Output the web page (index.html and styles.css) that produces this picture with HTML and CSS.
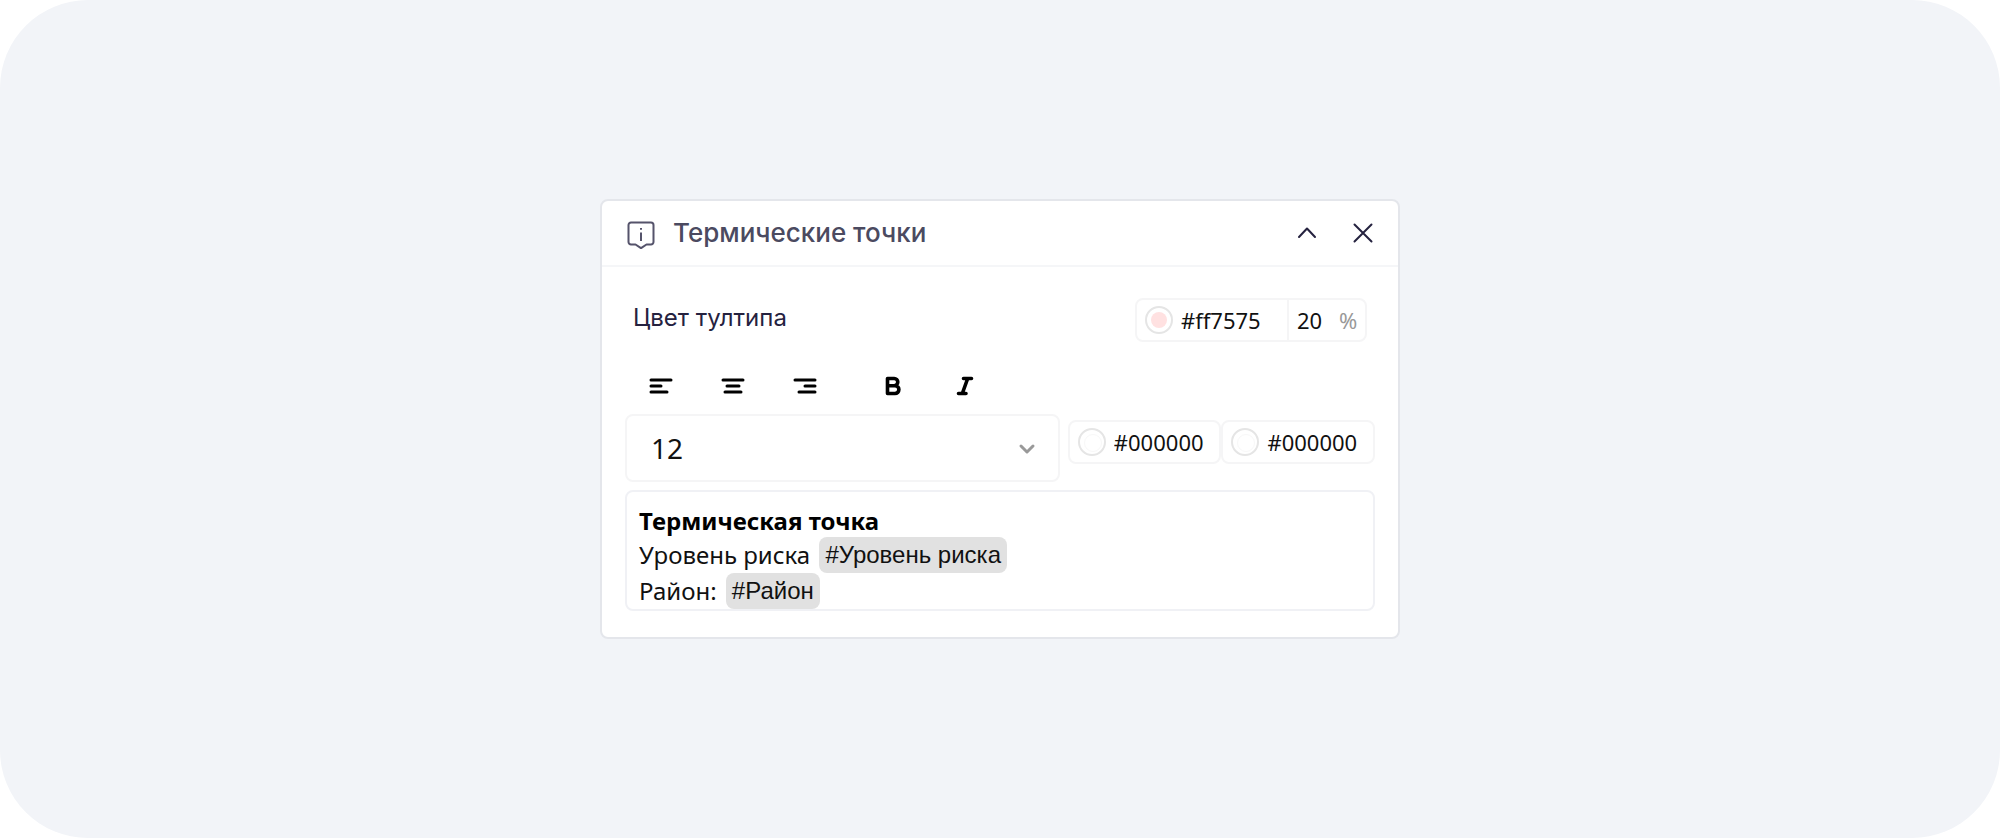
FILE: index.html
```html
<!DOCTYPE html>
<html lang="ru">
<head>
<meta charset="utf-8">
<meta name="viewport" content="width=device-width, initial-scale=1">
<title>Термические точки</title>
<link rel="stylesheet" href="styles.css">
</head>
<body>
<main class="stage">
  <section class="panel" aria-labelledby="panel-title">
    <header class="panel-header">
      <svg class="title-icon" viewBox="0 0 28 28" aria-hidden="true">
        <path d="M4 1.500h20a2.500 2.500 0 0 1 2.500 2.500v17a2.500 2.500 0 0 1-2.500 2.500h-4.500L14 27.200l-5.500-3.700H4A2.500 2.500 0 0 1 1.500 21V4A2.500 2.500 0 0 1 4 1.500z"/>
        <path d="M14 11.500v8.500M14 7v1.800"/>
      </svg>
      <h1 class="panel-title" id="panel-title">Термические точки</h1>
      <button class="header-button" type="button" aria-label="Свернуть">
        <svg class="header-glyph" viewBox="0 0 24 24" aria-hidden="true"><path d="M4 16l8-8.500 8 8.500"/></svg>
      </button>
      <button class="header-button" type="button" aria-label="Закрыть">
        <svg class="header-glyph" viewBox="0 0 24 24" aria-hidden="true"><path d="M3.500 3.500l17 17M20.500 3.500l-17 17"/></svg>
      </button>
    </header>

    <div class="panel-body">
      <div class="color-row">
        <label class="row-label" for="tooltip-color">Цвет тултипа</label>
        <div class="color-field color-field-wide">
          <span class="swatch swatch-pink"></span>
          <input class="hex-input" id="tooltip-color" type="text" value="#ff7575">
          <div class="opacity">
            <input class="opacity-input" id="tooltip-opacity" type="text" value="20" aria-label="Непрозрачность">
            <label class="percent" for="tooltip-opacity">%</label>
          </div>
        </div>
      </div>

      <div class="toolbar" role="toolbar" aria-label="Форматирование">
        <button class="tool" type="button" aria-label="По левому краю">
          <svg class="tool-glyph" viewBox="0 0 24 24" aria-hidden="true"><path d="M2 6h20M2 12h10M2 18h16"/></svg>
        </button>
        <button class="tool" type="button" aria-label="По центру">
          <svg class="tool-glyph" viewBox="0 0 24 24" aria-hidden="true"><path d="M2 6h20M6 12h12M4 18h16"/></svg>
        </button>
        <button class="tool" type="button" aria-label="По правому краю">
          <svg class="tool-glyph" viewBox="0 0 24 24" aria-hidden="true"><path d="M2 6h20M12 12h10M6 18h16"/></svg>
        </button>
        <span class="tool-gap"></span>
        <button class="tool" type="button" aria-label="Полужирный">
          <svg class="tool-glyph tool-glyph-bold" viewBox="0 0 24 24" aria-hidden="true"><path d="M6.500 4.500h6.700a3.600 3.600 0 0 1 0 7.200H6.500zM6.500 11.700h7.500a3.900 3.900 0 0 1 0 7.800H6.500z"/></svg>
        </button>
        <button class="tool" type="button" aria-label="Курсив">
          <svg class="tool-glyph tool-glyph-bold" viewBox="0 0 24 24" aria-hidden="true"><path d="M10.500 4.500H18.500M5.500 19.500h7.500M14.700 4.500L9.300 19.500"/></svg>
        </button>
      </div>

      <div class="style-row">
        <div class="select-box">
          <select class="size-select" aria-label="Размер шрифта">
            <option selected>12</option>
            <option>14</option>
            <option>16</option>
          </select>
          <svg class="select-arrow" viewBox="0 0 18 18" aria-hidden="true"><path d="M3 6l6 6 6-6"/></svg>
        </div>
        <div class="color-pair">
          <div class="color-field">
            <span class="swatch"></span>
            <input class="hex-input" type="text" value="#000000" aria-label="Цвет текста">
          </div>
          <div class="color-field">
            <span class="swatch"></span>
            <input class="hex-input" type="text" value="#000000" aria-label="Цвет фона">
          </div>
        </div>
      </div>

      <div class="editor" contenteditable="true" spellcheck="false" role="textbox" aria-multiline="true" aria-label="Текст тултипа">
        <div class="line line-bold">Термическая точка</div>
        <div class="line">Уровень риска <span class="chip">#Уровень риска</span></div>
        <div class="line">Район: <span class="chip">#Район</span></div>
      </div>
    </div>
  </section>
</main>
</body>
</html>
```
FILE: styles.css
```css
* {
  box-sizing: border-box;
}

body {
  margin: 0;
  background: #fff;
  font-family: "Noto Sans", sans-serif;
  color: #111;
}

button,
input,
select {
  margin: 0;
  padding: 0;
  border: 0;
  background: none;
  font: inherit;
  color: inherit;
}

.stage {
  display: flex;
  align-items: center;
  justify-content: center;
  min-height: 100vh;
  border-radius: 88px;
  background: #f2f4f8;
}

.panel {
  width: 100%;
  max-width: 800px;
  border: 2px solid #e4e6eb;
  border-radius: 8px;
  background: #fff;
}

.panel-header {
  display: flex;
  align-items: center;
  gap: 24px;
  height: 66px;
  padding: 0 19px 0 25px;
  border-bottom: 2px solid #f5f6f8;
}

.title-icon {
  width: 28px;
  height: 28px;
  margin-top: 4px;
  margin-right: -6px;
  fill: none;
  stroke: #55536b;
  stroke-width: 2;
  stroke-linejoin: round;
}

.panel-title {
  flex: 1;
  margin: 0;
  font: 500 26px/32px Inter, sans-serif;
  color: #4b4a60;
}

.header-button {
  display: flex;
  align-items: center;
  justify-content: center;
  width: 32px;
  height: 32px;
}

.header-glyph {
  width: 24px;
  height: 24px;
  fill: none;
  stroke: #25223f;
  stroke-width: 2;
  stroke-linecap: round;
  stroke-linejoin: round;
}

.panel-body {
  padding: 31px 23px 26px;
}

.color-row {
  display: flex;
  align-items: center;
  justify-content: space-between;
  padding: 0 8px;
}

.row-label {
  font: 400 24px/32px Inter, sans-serif;
  color: #25223f;
  padding-bottom: 4px;
}

.color-field {
  display: flex;
  flex: 1;
  align-items: center;
  gap: 8px;
  height: 44px;
  padding-left: 8px;
  border: 2px solid #f5f5f6;
  border-radius: 8px;
}

.color-field-wide {
  flex: 0 0 232px;
}

.swatch {
  flex: none;
  width: 28px;
  height: 28px;
  border: 2px solid #e5e5e5;
  border-radius: 50%;
  padding: 4px;
}

.swatch::before {
  content: "";
  display: block;
  width: 16px;
  height: 16px;
  border: 1px solid #f8f8f8;
  border-radius: 50%;
}

.swatch-pink::before {
  border: 0;
  background: #ffe1e1;
}

.hex-input {
  flex: 1;
  min-width: 0;
  width: 0;
  height: 32px;
  font-size: 22px;
}

.opacity {
  display: flex;
  align-items: center;
  width: 78px;
  height: 100%;
  padding: 0 8px;
  border-left: 2px solid #f5f5f6;
}

.opacity-input {
  width: 42px;
  height: 32px;
  font-size: 22px;
}

.percent {
  font-size: 22px;
  color: #999;
}

.toolbar {
  display: flex;
  align-items: center;
  gap: 40px;
  padding: 28px 20px 12px;
}

.tool {
  display: flex;
  align-items: center;
  justify-content: center;
  width: 32px;
  height: 32px;
}

.tool-gap {
  width: 0;
  margin-right: -24px;
}

.tool-glyph {
  width: 24px;
  height: 24px;
  fill: none;
  stroke: #000;
  stroke-width: 3;
  stroke-linecap: round;
  stroke-linejoin: round;
}

.tool-glyph-bold {
  stroke-width: 3.600;
}

.style-row {
  display: flex;
  align-items: flex-start;
  gap: 8px;
}

.select-box {
  position: relative;
  flex: 436;
}

.size-select {
  appearance: none;
  display: block;
  width: 100%;
  height: 68px;
  padding: 0 24px;
  border: 2px solid #f5f5f6;
  border-radius: 8px;
  font-size: 28px;
}

.select-arrow {
  position: absolute;
  top: 26px;
  right: 24px;
  width: 18px;
  height: 18px;
  fill: none;
  stroke: #999;
  stroke-width: 3;
  stroke-linecap: round;
  stroke-linejoin: round;
  pointer-events: none;
}

.color-pair {
  display: flex;
  flex: 308;
  padding-top: 6px;
}

.editor {
  margin-top: 8px;
  padding: 13px 12px 0;
  border: 2px solid #f0f1f5;
  border-radius: 8px;
  font-size: 24px;
  outline: 0;
}

.line {
  height: 36px;
  line-height: 36px;
}

.line-bold {
  height: 32px;
  line-height: 32px;
  font-weight: 700;
  color: #000;
}

.chip {
  display: inline-block;
  margin-left: 3px;
  padding: 0 6px;
  border-radius: 8px;
  background: #e1e1e1;
  font-family: "Liberation Sans", sans-serif;
  color: #111;
  vertical-align: top;
}
```
